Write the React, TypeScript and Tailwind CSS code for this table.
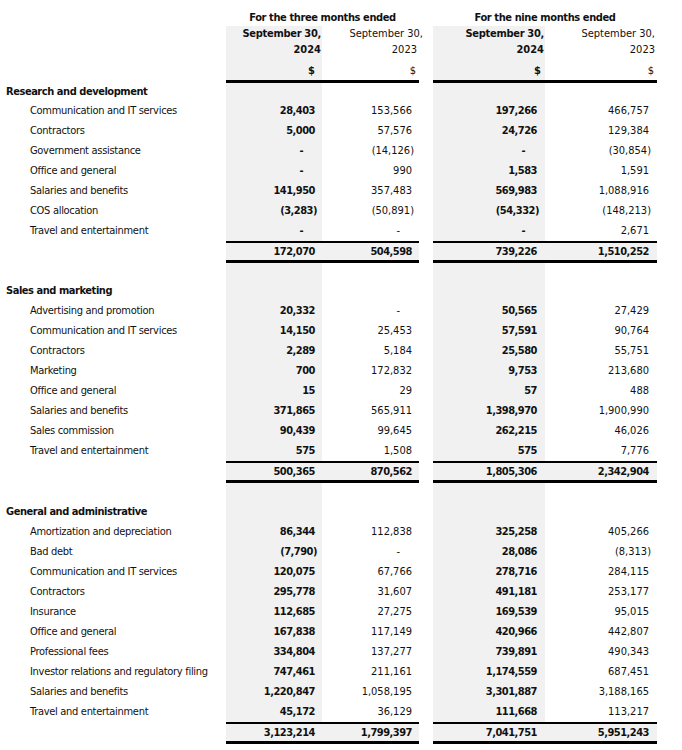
import React from 'react'

type Line = { label: string; v: [string, string, string, string] }
type Section = { title: string; gap: string; items: Line[]; total: [string, string, string, string] }

const sections: Section[] = [
  {
    title: 'Research and development',
    gap: 'h-0',
    items: [
      { label: 'Communication and IT services', v: ['28,403', '153,566', '197,266', '466,757'] },
      { label: 'Contractors', v: ['5,000', '57,576', '24,726', '129,384'] },
      { label: 'Government assistance', v: ['-', '(14,126)', '-', '(30,854)'] },
      { label: 'Office and general', v: ['-', '990', '1,583', '1,591'] },
      { label: 'Salaries and benefits', v: ['141,950', '357,483', '569,983', '1,088,916'] },
      { label: 'COS allocation', v: ['(3,283)', '(50,891)', '(54,332)', '(148,213)'] },
      { label: 'Travel and entertainment', v: ['-', '-', '-', '2,671'] },
    ],
    total: ['172,070', '504,598', '739,226', '1,510,252'],
  },
  {
    title: 'Sales and marketing',
    gap: 'h-[18px]',
    items: [
      { label: 'Advertising and promotion', v: ['20,332', '-', '50,565', '27,429'] },
      { label: 'Communication and IT services', v: ['14,150', '25,453', '57,591', '90,764'] },
      { label: 'Contractors', v: ['2,289', '5,184', '25,580', '55,751'] },
      { label: 'Marketing', v: ['700', '172,832', '9,753', '213,680'] },
      { label: 'Office and general', v: ['15', '29', '57', '488'] },
      { label: 'Salaries and benefits', v: ['371,865', '565,911', '1,398,970', '1,900,990'] },
      { label: 'Sales commission', v: ['90,439', '99,645', '262,215', '46,026'] },
      { label: 'Travel and entertainment', v: ['575', '1,508', '575', '7,776'] },
    ],
    total: ['500,365', '870,562', '1,805,306', '2,342,904'],
  },
  {
    title: 'General and administrative',
    gap: 'h-[19px]',
    items: [
      { label: 'Amortization and depreciation', v: ['86,344', '112,838', '325,258', '405,266'] },
      { label: 'Bad debt', v: ['(7,790)', '-', '28,086', '(8,313)'] },
      { label: 'Communication and IT services', v: ['120,075', '67,766', '278,716', '284,115'] },
      { label: 'Contractors', v: ['295,778', '31,607', '491,181', '253,177'] },
      { label: 'Insurance', v: ['112,685', '27,275', '169,539', '95,015'] },
      { label: 'Office and general', v: ['167,838', '117,149', '420,966', '442,807'] },
      { label: 'Professional fees', v: ['334,804', '137,277', '739,891', '490,343'] },
      { label: 'Investor relations and regulatory filing', v: ['747,461', '211,161', '1,174,559', '687,451'] },
      { label: 'Salaries and benefits', v: ['1,220,847', '1,058,195', '3,301,887', '3,188,165'] },
      { label: 'Travel and entertainment', v: ['45,172', '36,129', '111,668', '113,217'] },
    ],
    total: ['3,123,214', '1,799,397', '7,041,751', '5,951,243'],
  },
]

const grid = 'grid grid-cols-[226px_96px_97px_14px_112px_112px]'
const shade = 'bg-[#f1f1f1]'
// padding / shading / weight for the four number columns
const numPad = ['pr-[7px]', 'pr-[7px]', 'pr-[8px]', 'pr-[8px]']
const cellTone = [shade, '', shade, '']
const bold = 'font-bold tracking-[-0.5px]'
const weight = [bold, '', bold, '']

function Num({ value }: { value: string }) {
  if (value === '-') return <span className="mr-[12px]">-</span>
  if (value.startsWith('(')) return <span className="-mr-[2px]">{value}</span>
  return <span>{value}</span>
}

function DataCells({ v, total }: { v: [string, string, string, string]; total?: boolean }) {
  const cell = (i: number) => (
    <div
      className={`text-right ${numPad[i]} ${
        total
          ? `${shade} ${bold} border-t-2 border-b-[3px] border-black h-[22px] leading-[17px]`
          : `${cellTone[i]} ${weight[i]} h-[20px] leading-[20px]`
      }`}
    >
      <Num value={v[i]} />
    </div>
  )
  return (
    <>
      {cell(0)}
      {cell(1)}
      <div />
      {cell(2)}
      {cell(3)}
    </>
  )
}

function Blank({ className }: { className: string }) {
  return (
    <div className={`${grid} ${className}`}>
      <div />
      <div className={shade} />
      <div />
      <div />
      <div className={shade} />
      <div />
    </div>
  )
}

export default function App() {
  return (
    <div
      className="w-[682px] h-[750px] bg-white text-[#111] text-[11px] pt-[10px]"
      style={{ fontFamily: '"DejaVu Sans Condensed", "DejaVu Sans", sans-serif' }}
    >
      {/* column headings */}
      <div className={`${grid} h-[16px] leading-[16px] font-bold tracking-[-0.4px]`}>
        <div />
        <div className="col-span-2 text-center">For the three months ended</div>
        <div />
        <div className="col-span-2 text-center">For the nine months ended</div>
      </div>
      <div className={`${grid} h-[16px] leading-[16px]`}>
        <div />
        <div className={`${shade} text-right pr-[1px] font-bold tracking-[-0.3px]`}>September 30,</div>
        <div className="text-right -mr-[4px] whitespace-nowrap">September 30,</div>
        <div />
        <div className={`${shade} text-right pr-[1px] font-bold tracking-[-0.3px]`}>September 30,</div>
        <div className="text-right pr-[2px]">September 30,</div>
      </div>
      <div className={`${grid} h-[16px] leading-[16px]`}>
        <div />
        <div className={`${shade} text-right pr-[1px] font-bold`}>2024</div>
        <div className="text-right pr-[2px]">2023</div>
        <div />
        <div className={`${shade} text-right pr-[1px] font-bold`}>2024</div>
        <div className="text-right pr-[2px]">2023</div>
      </div>
      <div className={`${grid} h-[25px] leading-[16px]`}>
        <div />
        <div className={`${shade} text-right pr-[7px] pt-[5px] font-bold border-b-[3px] border-black`}>$</div>
        <div className="text-right pr-[3px] pt-[5px] border-b-[3px] border-black">$</div>
        <div />
        <div className={`${shade} text-right pr-[4px] pt-[5px] font-bold border-b-[3px] border-black`}>$</div>
        <div className="text-right pr-[3px] pt-[5px] border-b-[3px] border-black">$</div>
      </div>

      {sections.map((s) => (
        <div key={s.title}>
          {s.gap !== 'h-0' && <Blank className={s.gap} />}
          <div className={`${grid} ${s.gap === 'h-0' ? 'h-[18px] leading-[18px]' : 'h-[20px] leading-[20px]'}`}>
            <div className="pl-[6px] font-bold tracking-[-0.45px] whitespace-nowrap">{s.title}</div>
            <div className={shade} />
            <div />
            <div />
            <div className={shade} />
            <div />
          </div>
          {s.items.map((it) => (
            <div key={it.label} className={grid}>
              <div className="pl-[30px] h-[20px] leading-[20px] tracking-[-0.3px] whitespace-nowrap">{it.label}</div>
              <DataCells v={it.v} />
            </div>
          ))}
          <div className={grid}>
            <div />
            <DataCells v={s.total} total />
          </div>
        </div>
      ))}
    </div>
  )
}
